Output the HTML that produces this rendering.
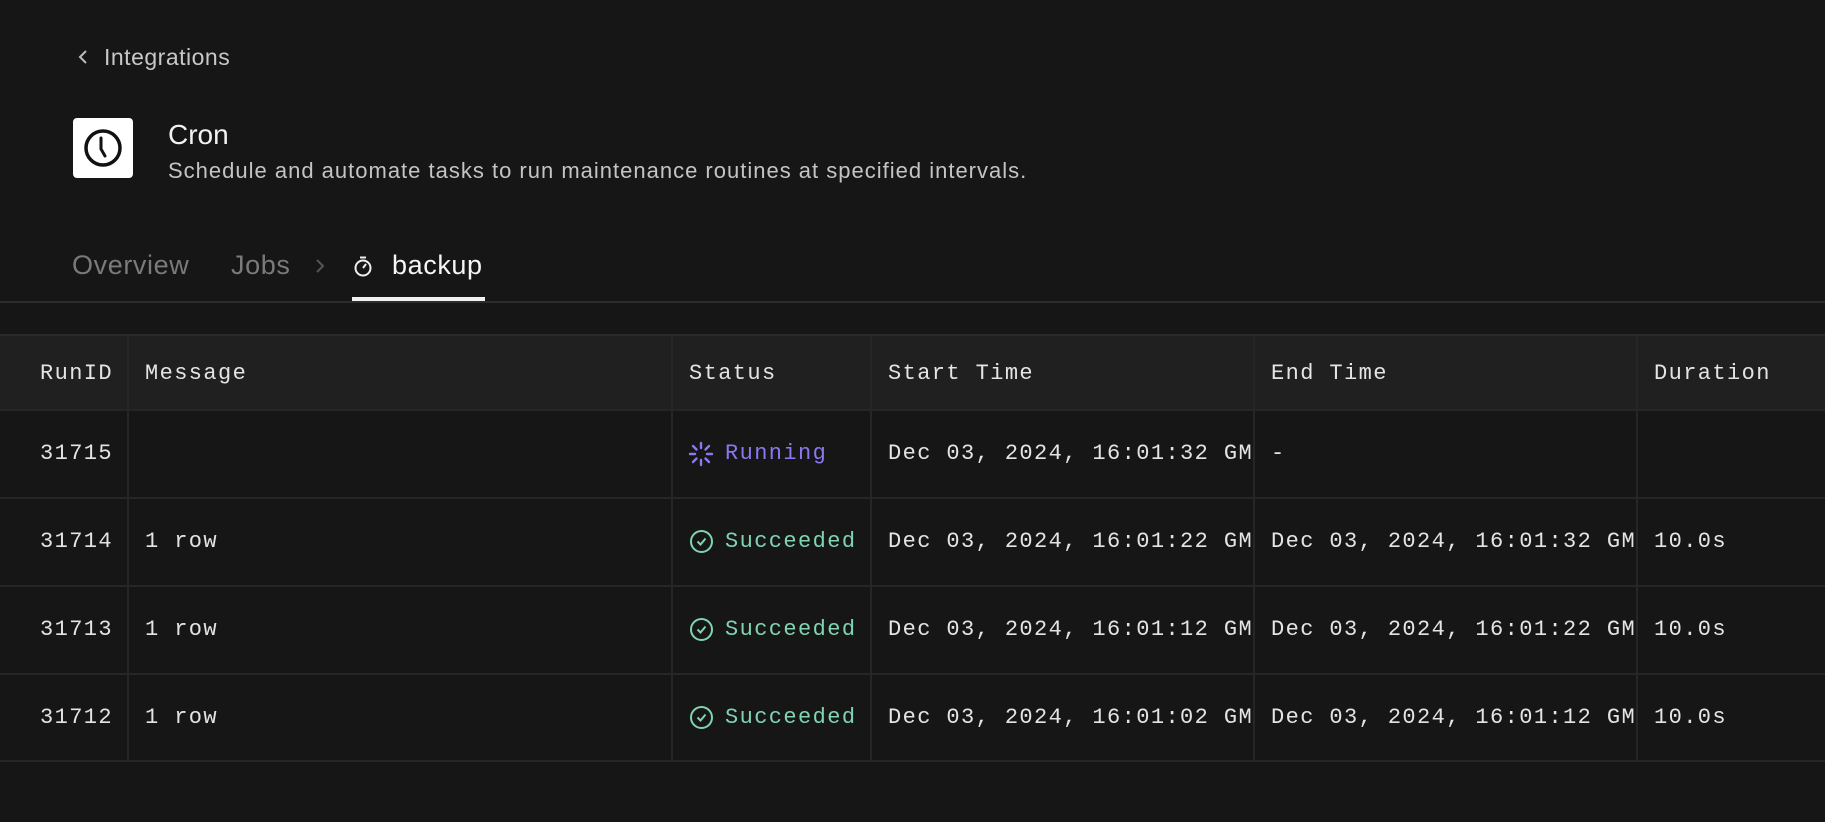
<!DOCTYPE html>
<html><head><meta charset="utf-8"><style>
*{margin:0;padding:0;box-sizing:border-box}
body{width:1825px;height:822px;background:#161616;font-family:"Liberation Sans",sans-serif;overflow:hidden;position:relative;color:#eee}
.abs{position:absolute;white-space:nowrap}
.mono{font-family:"Liberation Mono",monospace;font-size:22px;letter-spacing:1.4px;color:#e4e4e4}
.vl{position:absolute;top:336px;width:2px;height:425px;background:#262626}
.hl{position:absolute;left:0;width:1825px;height:2px;background:#262626}
.cell{position:absolute;overflow:hidden;white-space:nowrap}
</style></head><body>
<svg class="abs" style="left:76px;top:48px" width="14" height="18" viewBox="0 0 14 18"><path d="M10 3 L4 9 L10 15" stroke="#bbb" stroke-width="2" fill="none"/></svg>
<div class="abs" style="left:104px;top:44px;font-size:23px;letter-spacing:0.5px;color:#c8c8c8">Integrations</div>
<div class="abs" style="left:73px;top:118px;width:60px;height:60px;background:#fff;border-radius:4px"></div>
<svg class="abs" style="left:80px;top:125px" width="46" height="46" viewBox="0 0 46 46"><circle cx="23" cy="23" r="17" stroke="#111" stroke-width="3.5" fill="none"/><path d="M21 13 L21 24 L25 31" stroke="#111" stroke-width="3" fill="none" stroke-linecap="round"/></svg>
<div class="abs" style="left:168px;top:119px;font-size:28px;color:#f2f2f2">Cron</div>
<div class="abs" style="left:168px;top:158px;font-size:22px;letter-spacing:1px;color:#c4c4c4">Schedule and automate tasks to run maintenance routines at specified intervals.</div>
<div class="abs" style="left:72px;top:250px;font-size:27px;letter-spacing:0.6px;color:#7a7a7a">Overview</div>
<div class="abs" style="left:231px;top:250px;font-size:27px;letter-spacing:0.6px;color:#7a7a7a">Jobs</div>
<svg class="abs" style="left:313px;top:256px" width="14" height="20" viewBox="0 0 14 20"><path d="M4 4 L10 10 L4 16" stroke="#555" stroke-width="2" fill="none"/></svg>
<svg class="abs" style="left:352px;top:254px" width="22" height="24" viewBox="0 0 22 24"><circle cx="11" cy="14" r="7.5" stroke="#eee" stroke-width="2" fill="none"/><path d="M8 3.5 H14 M11 14 L14 10" stroke="#eee" stroke-width="2" fill="none"/></svg>
<div class="abs" style="left:392px;top:250px;font-size:27px;letter-spacing:0.6px;color:#f5f5f5">backup</div>
<div class="abs" style="left:352px;top:297px;width:133px;height:4px;background:#f0f0f0"></div>
<div class="abs" style="left:0;top:301px;width:1825px;height:2px;background:#2c2c2c"></div>
<div class="abs" style="left:0;top:336px;width:1825px;height:74px;background:#202020"></div>
<div class="hl" style="top:334px;background:#2a2a2a"></div>
<div class="hl" style="top:409px"></div><div class="hl" style="top:497px"></div><div class="hl" style="top:585px"></div><div class="hl" style="top:673px"></div><div class="hl" style="top:760px"></div>
<div class="vl" style="left:127px"></div><div class="vl" style="left:671px"></div><div class="vl" style="left:870px"></div><div class="vl" style="left:1253px"></div><div class="vl" style="left:1636px"></div>
<div class="cell mono" style="left:40px;top:361px">RunID</div>
<div class="cell mono" style="left:145px;top:361px">Message</div>
<div class="cell mono" style="left:689px;top:361px">Status</div>
<div class="cell mono" style="left:888px;top:361px">Start Time</div>
<div class="cell mono" style="left:1271px;top:361px">End Time</div>
<div class="cell mono" style="left:1654px;top:361px">Duration</div>

<div class="cell mono" style="left:40px;top:441px">31715</div>
<svg class="abs" style="left:688px;top:441px" width="26" height="26" viewBox="0 0 26 26" stroke="#8a78f0" stroke-width="2.4" stroke-linecap="round"><path d="M13 2v5M13 19v5M2 13h5M19 13h5M5 5l3.5 3.5M17.5 17.5L21 21M21 5l-3.5 3.5M8.5 17.5L5 21"/></svg>
<div class="cell mono" style="left:725px;top:441px;color:#8a78f0">Running</div>
<div class="cell mono" style="left:888px;top:441px;width:365px">Dec 03, 2024, 16:01:32 GMT</div>
<div class="cell mono" style="left:1271px;top:441px">-</div>

<div class="cell mono" style="left:40px;top:529px">31714</div>
<div class="cell mono" style="left:145px;top:529px">1 row</div>
<svg class="abs" style="left:689px;top:529px" width="25" height="25" viewBox="0 0 25 25"><circle cx="12.5" cy="12.5" r="10.5" stroke="#7fd4b2" stroke-width="2" fill="none"/><path d="M8.5 12.5l3 3 5-6" stroke="#7fd4b2" stroke-width="2" fill="none"/></svg>
<div class="cell mono" style="left:725px;top:529px;color:#7fd4b2">Succeeded</div>
<div class="cell mono" style="left:888px;top:529px;width:365px">Dec 03, 2024, 16:01:22 GMT</div>
<div class="cell mono" style="left:1271px;top:529px;width:365px">Dec 03, 2024, 16:01:32 GMT</div>
<div class="cell mono" style="left:1654px;top:529px">10.0s</div>

<div class="cell mono" style="left:40px;top:617px">31713</div>
<div class="cell mono" style="left:145px;top:617px">1 row</div>
<svg class="abs" style="left:689px;top:617px" width="25" height="25" viewBox="0 0 25 25"><circle cx="12.5" cy="12.5" r="10.5" stroke="#7fd4b2" stroke-width="2" fill="none"/><path d="M8.5 12.5l3 3 5-6" stroke="#7fd4b2" stroke-width="2" fill="none"/></svg>
<div class="cell mono" style="left:725px;top:617px;color:#7fd4b2">Succeeded</div>
<div class="cell mono" style="left:888px;top:617px;width:365px">Dec 03, 2024, 16:01:12 GMT</div>
<div class="cell mono" style="left:1271px;top:617px;width:365px">Dec 03, 2024, 16:01:22 GMT</div>
<div class="cell mono" style="left:1654px;top:617px">10.0s</div>

<div class="cell mono" style="left:40px;top:705px">31712</div>
<div class="cell mono" style="left:145px;top:705px">1 row</div>
<svg class="abs" style="left:689px;top:705px" width="25" height="25" viewBox="0 0 25 25"><circle cx="12.5" cy="12.5" r="10.5" stroke="#7fd4b2" stroke-width="2" fill="none"/><path d="M8.5 12.5l3 3 5-6" stroke="#7fd4b2" stroke-width="2" fill="none"/></svg>
<div class="cell mono" style="left:725px;top:705px;color:#7fd4b2">Succeeded</div>
<div class="cell mono" style="left:888px;top:705px;width:365px">Dec 03, 2024, 16:01:02 GMT</div>
<div class="cell mono" style="left:1271px;top:705px;width:365px">Dec 03, 2024, 16:01:12 GMT</div>
<div class="cell mono" style="left:1654px;top:705px">10.0s</div>
</body></html>
